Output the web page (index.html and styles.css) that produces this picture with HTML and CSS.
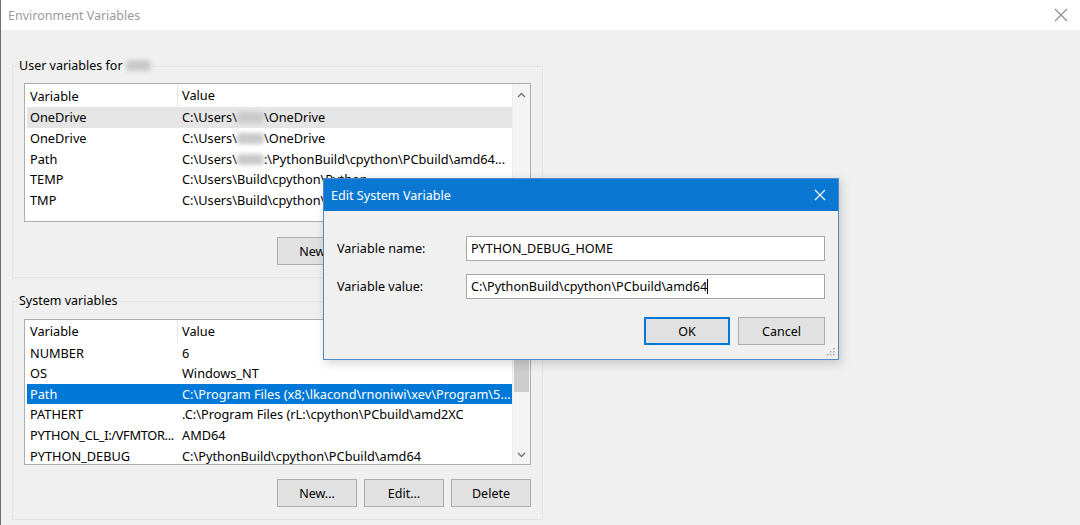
FILE: index.html
```html
<!DOCTYPE html>
<html lang="en">
<head>
    <meta charset="UTF-8">
    <meta name="viewport" content="width=device-width, initial-scale=1.0">
    <title>Environment Variables</title>
    <link rel="stylesheet" href="styles.css">
</head>
<body>
    <div class="window">
        <div class="titlebar">
            <span class="title">Environment Variables</span>
            <svg class="close" width="14" height="14" viewBox="0 0 14 14">
                <path d="M1 1 L13 13 M13 1 L1 13" stroke="#8a8a8a" stroke-width="1.1" fill="none"/>
            </svg>
        </div>
        <div class="content">
            <fieldset class="group">
                <legend>User variables for <span class="blur name"></span></legend>
                <div class="list user-list">
                    <div class="rows">
                        <div class="row head"><span>Variable</span><span>Value</span></div>
                        <div class="row hover"><span>OneDrive</span><span>C:\Users\<span class="blur"></span>\OneDrive</span></div>
                        <div class="row"><span>OneDrive</span><span>C:\Users\<span class="blur"></span>\OneDrive</span></div>
                        <div class="row"><span>Path</span><span>C:\Users\<span class="blur"></span>:\PythonBuild\cpython\PCbuild\amd64...</span></div>
                        <div class="row"><span>TEMP</span><span>C:\Users\Build\cpython\Python</span></div>
                        <div class="row"><span>TMP</span><span>C:\Users\Build\cpython\Python</span></div>
                    </div>
                    <div class="scrollbar">
                        <svg class="arrow" width="9" height="6" viewBox="0 0 9 6"><path d="M1 5 L4.5 1.5 L8 5" stroke="#707070" stroke-width="1.3" fill="none"/></svg>
                    </div>
                </div>
                <div class="buttons">
                    <button>New...</button>
                    <button>Edit...</button>
                    <button>Delete</button>
                </div>
            </fieldset>

            <fieldset class="group system">
                <legend>System variables</legend>
                <div class="list system-list">
                    <div class="rows">
                        <div class="row head"><span>Variable</span><span>Value</span></div>
                        <div class="row"><span>NUMBER</span><span>6</span></div>
                        <div class="row"><span>OS</span><span>Windows_NT</span></div>
                        <div class="row selected"><span>Path</span><span>C:\Program Files (x8;\lkacond\rnoniwi\xev\Program\5...</span></div>
                        <div class="row"><span>PATHERT</span><span>.C:\Program Files (rL:\cpython\PCbuild\amd2XC</span></div>
                        <div class="row"><span class="tight">PYTHON_CL_I:/VFMTOR...</span><span>AMD64</span></div>
                        <div class="row"><span>PYTHON_DEBUG</span><span>C:\PythonBuild\cpython\PCbuild\amd64</span></div>
                    </div>
                    <div class="scrollbar">
                        <svg class="arrow" width="9" height="6" viewBox="0 0 9 6"><path d="M1 5 L4.5 1.5 L8 5" stroke="#707070" stroke-width="1.3" fill="none"/></svg>
                        <div class="thumb"></div>
                        <div class="track"></div>
                        <svg class="arrow" width="9" height="6" viewBox="0 0 9 6"><path d="M1 1 L4.5 4.5 L8 1" stroke="#707070" stroke-width="1.3" fill="none"/></svg>
                    </div>
                </div>
                <div class="buttons">
                    <button>New...</button>
                    <button>Edit...</button>
                    <button>Delete</button>
                </div>
            </fieldset>
        </div>

        <div class="dialog">
            <div class="dialog-title">
                <span>Edit System Variable</span>
                <svg class="close" width="12" height="12" viewBox="0 0 12 12">
                    <path d="M1 1 L11 11 M11 1 L1 11" stroke="#ffffff" stroke-width="1.1" fill="none"/>
                </svg>
            </div>
            <div class="dialog-body">
                <div class="field">
                    <label>Variable name:</label>
                    <div class="input">PYTHON_DEBUG_HOME</div>
                </div>
                <div class="field">
                    <label>Variable value:</label>
                    <div class="input">C:\PythonBuild\cpython\PCbuild\amd64<span class="caret"></span></div>
                </div>
                <div class="dialog-buttons">
                    <button class="default">OK</button>
                    <button class="cancel">Cancel</button>
                </div>
            </div>
            <svg class="grip" width="9" height="9" viewBox="0 0 9 9">
                <rect x="7" y="1" width="1.5" height="1.5" fill="#a8a8a8"/>
                <rect x="4" y="4" width="1.5" height="1.5" fill="#a8a8a8"/>
                <rect x="7" y="4" width="1.5" height="1.5" fill="#a8a8a8"/>
                <rect x="1" y="7" width="1.5" height="1.5" fill="#a8a8a8"/>
                <rect x="4" y="7" width="1.5" height="1.5" fill="#a8a8a8"/>
                <rect x="7" y="7" width="1.5" height="1.5" fill="#a8a8a8"/>
            </svg>
        </div>
    </div>
</body>
</html>
```

FILE: styles.css
```css
body {
    margin: 0;
    font-family: "Noto Sans", "Open Sans", sans-serif;
    font-size: 12px;
    color: #000;
    background: #f0f0f0;
}
.window {
    position: relative;
    width: 1080px;
    height: 525px;
    box-sizing: border-box;
    border-left: 1px solid #6e6e6e;
    background: #f0f0f0;
    overflow: hidden;
}
.titlebar {
    height: 30px;
    background: #fff;
    display: flex;
    align-items: center;
    justify-content: space-between;
    padding: 0 12px 0 7px;
}
.title {
    color: #9a9a9a;
    font-size: 12.5px;
}
.content {
    padding: 28px 0 0 11px;
}
.group {
    width: 531px;
    box-sizing: border-box;
    margin: 0 0 15px 0;
    padding: 9px 11px 12px 11px;
    border: 1px solid #e3e3e3;
}
.group.system {
    padding-top: 10px;
}
.group.system .buttons {
    margin-top: 14px;
}
.group legend {
    padding: 0 2px;
    margin-left: -7px;
    line-height: 16px;
    font-size: 12.5px;
}
.blur {
    display: inline-block;
    width: 27px;
    height: 11px;
    vertical-align: -1px;
    background: #c9c9c9;
    border-radius: 4px;
    filter: blur(2px);
}
.blur.name {
    width: 25px;
    margin-left: 0;
}
.list {
    display: flex;
    border: 1px solid #adadad;
    background: #fff;
    padding-left: 2px;
    overflow: hidden;
    font-size: 12.75px;
}
.user-list {
    height: 137px;
}
.system-list {
    height: 144px;
}
.system-list .row {
    height: 20.55px;
}
.system-list .row.head {
    height: 22.5px;
}
.rows {
    flex: 1;
    overflow: hidden;
}
.row {
    display: grid;
    grid-template-columns: 150px 1fr;
    height: 20.7px;
    align-items: center;
    white-space: nowrap;
}
.row span {
    overflow: hidden;
}
.row > span:first-child {
    padding-left: 3px;
    text-overflow: clip;
}
.row > span:last-child {
    padding-left: 5px;
}
.row .tight {
    letter-spacing: -0.3px;
}
.row.head {
    height: 23px;
}
.row.head > span:last-child {
    border-left: 1px solid #e5e5e5;
    line-height: 23px;
    padding-left: 4px;
}
.row.hover {
    background: #e5e5e5;
}
.row.selected {
    background: #0078d7;
    color: #fff;
}
.scrollbar {
    width: 17px;
    background: #f4f4f4;
    border-left: 1px solid #ececec;
    display: flex;
    flex-direction: column;
    align-items: center;
}
.scrollbar .arrow {
    margin: 8px 0 6px;
}
.scrollbar .thumb {
    width: 15px;
    height: 53px;
    background: #cdcdcd;
    margin-top: -1px;
}
.scrollbar .track {
    flex: 1;
}
.buttons {
    display: flex;
    justify-content: flex-end;
    gap: 7px;
    margin-top: 15px;
}
button {
    font-family: inherit;
    font-size: 12.5px;
    color: #000;
    background: #e1e1e1;
    border: 1px solid #adadad;
    height: 28px;
    padding: 0;
}
.buttons button {
    width: 80px;
}

.dialog {
    position: absolute;
    left: 322px;
    top: 178px;
    width: 516px;
    height: 182px;
    box-sizing: border-box;
    border: 1px solid #4f8bc9;
    background: #f0f0f0;
    box-shadow: 2px 3px 10px rgba(0, 0, 0, 0.18);
}
.dialog-title {
    height: 32px;
    background: #0a78d2;
    color: #fff;
    display: flex;
    align-items: center;
    justify-content: space-between;
    padding: 0 12px 0 7px;
    font-size: 12.6px;
}
.dialog-body {
    padding: 25px 13px 0 13px;
}
.field {
    display: grid;
    grid-template-columns: 129px 1fr;
    align-items: center;
    margin-bottom: 13px;
}
.field label {
    font-size: 12.6px;
}
.input {
    height: 25px;
    box-sizing: border-box;
    border: 1px solid #a6a6a6;
    background: #fff;
    padding-left: 4px;
    line-height: 23px;
    font-size: 12.6px;
    white-space: nowrap;
}
.caret {
    display: inline-block;
    width: 1px;
    height: 15px;
    background: #000;
    vertical-align: -3px;
}
.dialog-buttons {
    display: flex;
    justify-content: flex-end;
    gap: 8px;
    margin-top: 18px;
}
.dialog-buttons .default {
    width: 86px;
    border: 1px solid #0078d7;
    box-shadow: inset 0 0 0 1px #0078d7;
}
.dialog-buttons .cancel {
    width: 87px;
}
.grip {
    position: absolute;
    right: 3px;
    bottom: 3px;
}
```
